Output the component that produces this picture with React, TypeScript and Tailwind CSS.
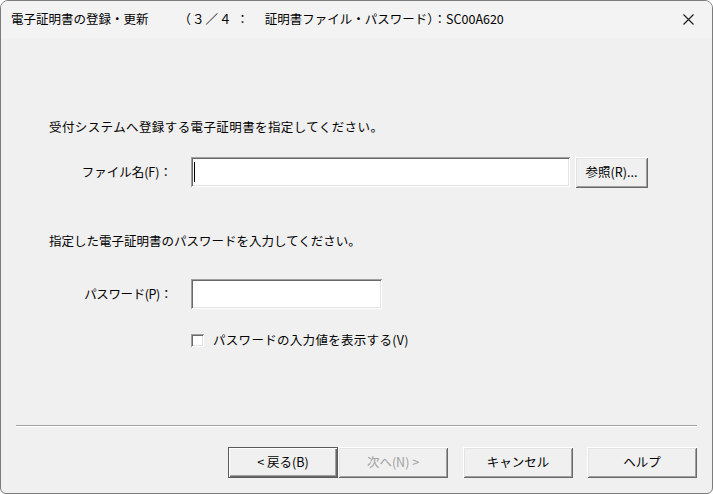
import React from 'react';

const font = { fontFamily: '"Noto Sans CJK JP", "Noto Sans", sans-serif' };

const raised =
  'bg-[#f0f0f0] shadow-[inset_1px_1px_#ffffff,inset_-1px_-1px_#696969,inset_2px_2px_#e3e3e3,inset_-2px_-2px_#a0a0a0]';
const sunken =
  'bg-white shadow-[inset_1px_1px_#a0a0a0,inset_-1px_-1px_#ffffff,inset_2px_2px_#696969,inset_-2px_-2px_#e3e3e3]';

function Button({ label, disabled, isDefault, className }: { label: string; disabled?: boolean; isDefault?: boolean; className?: string }) {
  return (
    <div
      className={
        'flex h-[31px] w-[110px] items-center justify-center text-[12.5px] ' +
        (isDefault
          ? 'bg-[#f0f0f0] shadow-[inset_0_0_0_1px_#5a5a5a,inset_2px_2px_#ffffff,inset_-2px_-2px_#696969,inset_-3px_-3px_#a0a0a0] '
          : raised + ' ') +
        (disabled ? 'text-[#a0a0a0] ' : 'text-black ') +
        (className ?? '')
      }
    >
      {label}
    </div>
  );
}

export default function App() {
  return (
    <div style={font} className="h-[494px] w-[713px] overflow-hidden rounded-t-[8px] rounded-b-[6px] border border-[#7c7c7c] bg-[#f0f0f0] text-black">
      {/* Title bar */}
      <div className="flex h-[37px] items-center justify-between bg-[#f3f3f3] pl-[10px] pr-[18px]">
        <span className="flex items-center whitespace-pre text-[12.5px] leading-none">
          <span>電子証明書の登録・更新</span>
          <span className="ml-[30px] tracking-[1px]">（３／４ ：</span>
          <span className="ml-[15px]">証明書ファイル・パスワード）：SC00A620</span>
        </span>
        <svg width="11" height="11" viewBox="0 0 11 11" className="mb-[1px]">
          <path d="M0.5 0.5 L10.5 10.5 M10.5 0.5 L0.5 10.5" stroke="#1a1a1a" strokeWidth="1.1" />
        </svg>
      </div>

      {/* Body */}
      <div className="flex h-[455px] flex-col">
        <p className="ml-[48px] mt-[80px] text-[12.5px] leading-[18px] tracking-[0.4px]">
          受付システムへ登録する電子証明書を指定してください。
        </p>

        <div className="mt-[21px] flex h-[31px] items-start">
          <div className="w-[171px] pt-[6px] text-right text-[12.5px] leading-[18px]">ファイル名(F)：</div>
          <div className={'ml-[19px] flex h-[30px] w-[379px] items-center pl-[3px] ' + sunken}>
            <div className="h-[20px] w-[1px] bg-black" />
          </div>
          <div className={'ml-[5px] flex h-[31px] w-[73px] items-center justify-center text-[12.5px] ' + raised}>
            参照(R)...
          </div>
        </div>

        <p className="ml-[48px] mt-[44px] text-[12.5px] leading-[18px]">
          指定した電子証明書のパスワードを入力してください。
        </p>

        <div className="mt-[29px] flex h-[30px] items-center">
          <div className="w-[171px] text-right text-[12.5px] leading-[18px] tracking-[-0.4px]">パスワード(P)：</div>
          <div className={'ml-[19px] h-[30px] w-[191px] ' + sunken} />
        </div>

        <div className="ml-[190px] mt-[22px] flex h-[18px] items-center gap-[9px]">
          <div className={'h-[13px] w-[13px] ' + sunken} />
          <span className="text-[12.5px] leading-[18px] tracking-[0.3px]">パスワードの入力値を表示する(V)</span>
        </div>

        <div className="mx-[15px] mt-[76px] h-[2px] border-t border-b border-t-[#a0a0a0] border-b-white" />

        <div className="mt-[20px] flex justify-end pr-[15px]">
          <Button label="< 戻る(B)" isDefault />
          <Button label="次へ(N) >" disabled />
          <Button label="キャンセル" className="ml-[15px]" />
          <Button label="ヘルプ" className="ml-[14px]" />
        </div>
      </div>
    </div>
  );
}
